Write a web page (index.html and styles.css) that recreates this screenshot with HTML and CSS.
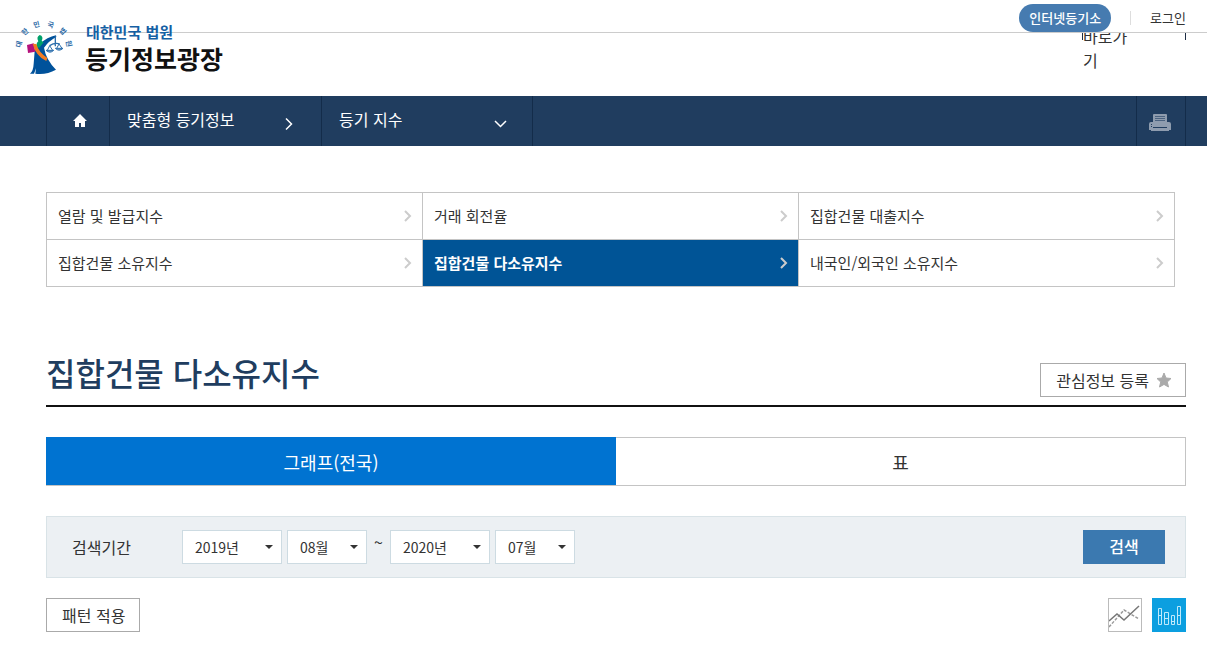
FILE: index.html
```html
<!DOCTYPE html>
<html lang="ko">
<head>
<meta charset="utf-8">
<meta name="viewport" content="width=device-width, initial-scale=1">
<title>집합건물 다소유지수</title>
<link rel="stylesheet" href="styles.css">
</head>
<body>
<header class="header">
  <div class="topbar">
    <a class="topbar-pill" href="#">인터넷등기소</a>
    <a class="topbar-login" href="#">로그인</a>
  </div>
  <a class="quick" href="#"><span class="quick-text">바로가기</span></a>
  <a class="logo" href="#">
    <svg class="logo-mark" viewBox="0 0 210 195" aria-hidden="true">
      <g class="logo-arc">
        <text transform="translate(28 88) rotate(-75)" y="6">대</text>
        <text transform="translate(46 51) rotate(-42)" y="6">한</text>
        <text transform="translate(80 30) rotate(-14)" y="6">민</text>
        <text transform="translate(122 31) rotate(14)" y="6">국</text>
        <text transform="translate(157 50) rotate(45)" y="6">법</text>
        <text transform="translate(175 86) rotate(78)" y="6">원</text>
      </g>
      <path fill="#00529b" d="M88 88 Q112 66 138 61 L139 66 Q116 78 102 98 Q108 134 138 164 Q110 180 76 176 L78 160 L72 176 L60 176 Q70 168 71 146 L74 108 Z"/>
      <path fill="#00a06a" d="M80 96 Q78 84 85 79 Q78 66 89 60 Q102 64 95 78 L101 82 L88 98 Z"/>
      <path fill="#b5127c" d="M51 90 L71 85 L76 110 L54 114 Z"/>
      <path fill="#f47b20" d="M68 86 L79 87 Q86 112 112 129 L109 138 Q78 124 68 86 Z"/>
      <g fill="none" stroke="#2b6eac" stroke-width="3">
        <path stroke-width="4" d="M136 64 V94 M119 92 Q134 82 149 87"/>
        <path d="M119 92 L112 106 M119 92 L128 106 M147 87 L140 100 M147 87 L156 100"/>
        <path d="M108 106 H131 Q120 117 108 106 M136 100 H159 Q147 111 136 100" fill="#7fa8cd"/>
      </g>
    </svg>
    <span class="logo-text">
      <span class="logo-sub">대한민국 법원</span>
      <strong class="logo-name">등기정보광장</strong>
    </span>
  </a>
</header>

<nav class="crumbs">
  <div class="crumbs-inner">
    <a class="crumb crumb-home" href="#" aria-label="홈">
      <svg width="14" height="14" viewBox="0 0 14 14" aria-hidden="true"><path fill="#fff" d="M7 0 L14 7 H12 V13 H8 V9 H6 V13 H2 V7 H0 Z"/></svg>
    </a>
    <a class="crumb" href="#">맞춤형 등기정보
      <svg class="crumb-arrow" width="14" height="14" viewBox="0 0 14 14" aria-hidden="true"><path fill="none" stroke="#fff" stroke-width="1.5" d="M4 1.500 L9.500 7 L4 12.500"/></svg>
    </a>
    <a class="crumb" href="#">등기 지수
      <svg class="crumb-arrow" width="14" height="14" viewBox="0 0 14 14" aria-hidden="true"><path fill="none" stroke="#fff" stroke-width="1.500" d="M2 4 L7.500 9.500 L13 4"/></svg>
    </a>
    <button class="print" type="button" aria-label="인쇄">
      <svg width="22" height="17" viewBox="0 0 22 17" aria-hidden="true">
        <path fill="#8e9cae" d="M4 1 Q4 0 5 0 H17 Q18 0 18 1 V8 H4 Z"/>
        <path stroke="#4a627f" d="M6 2.500 H16 M6 4.500 H16 M6 6.500 H16"/>
        <path fill="#8e9cae" d="M2 8 H20 Q22 8 22 10 V16 H20 V17 H2 V16 H0 V10 Q0 8 2 8 Z"/>
        <path stroke="#203d5f" d="M4 13.500 H18 M2 10.500 H3 M2 12.500 H3"/>
      </svg>
    </button>
  </div>
</nav>

<main class="content">
  <ul class="menu">
    <li><a class="menu-item" href="#">열람 및 발급지수<svg class="menu-arrow" viewBox="0 0 8 12" aria-hidden="true"><path d="M1 1 L6 6 L1 11"/></svg></a></li>
    <li><a class="menu-item" href="#">거래 회전율<svg class="menu-arrow" viewBox="0 0 8 12" aria-hidden="true"><path d="M1 1 L6 6 L1 11"/></svg></a></li>
    <li><a class="menu-item" href="#">집합건물 대출지수<svg class="menu-arrow" viewBox="0 0 8 12" aria-hidden="true"><path d="M1 1 L6 6 L1 11"/></svg></a></li>
    <li><a class="menu-item" href="#">집합건물 소유지수<svg class="menu-arrow" viewBox="0 0 8 12" aria-hidden="true"><path d="M1 1 L6 6 L1 11"/></svg></a></li>
    <li><a class="menu-item is-active" href="#" aria-current="page">집합건물 다소유지수<svg class="menu-arrow" viewBox="0 0 8 12" aria-hidden="true"><path d="M1 1 L6 6 L1 11"/></svg></a></li>
    <li><a class="menu-item" href="#">내국인/외국인 소유지수<svg class="menu-arrow" viewBox="0 0 8 12" aria-hidden="true"><path d="M1 1 L6 6 L1 11"/></svg></a></li>
  </ul>

  <div class="title-row">
    <h1 class="title">집합건물 다소유지수</h1>
    <button class="btn" type="button">관심정보 등록
      <svg width="16" height="16" viewBox="0 0 16 16" aria-hidden="true"><path fill="#aaa" stroke="#aaa" stroke-linejoin="round" d="M8 1 L10 6 L15 6.500 L11.300 10 L12.500 15 L8 12.400 L3.500 15 L4.700 10 L1 6.500 L6 6 Z"/></svg>
    </button>
  </div>

  <div class="tabs" role="tablist">
    <button class="tab is-active" type="button" role="tab" aria-selected="true">그래프(전국)</button>
    <button class="tab" type="button" role="tab" aria-selected="false">표</button>
  </div>

  <form class="search">
    <label class="search-label" for="from-year">검색기간</label>
    <div class="period">
      <span class="select year"><select id="from-year"><option>2019년</option></select></span>
      <span class="select month"><select aria-label="시작 월"><option>08월</option></select></span>
    </div>
    <span class="tilde">~</span>
    <div class="period">
      <span class="select year"><select aria-label="종료 연도"><option>2020년</option></select></span>
      <span class="select month"><select aria-label="종료 월"><option>07월</option></select></span>
    </div>
    <button class="search-btn" type="button">검색</button>
  </form>

  <div class="tools">
    <button class="btn" type="button">패턴 적용</button>
    <div class="views">
      <button class="view" type="button" aria-label="선 그래프">
        <svg width="32" height="32" viewBox="0 0 32 32" fill="none" aria-hidden="true">
          <path stroke="#999" stroke-width="1.500" stroke-dasharray="3 1.500" d="M0 28 L15 11 L30 20"/>
          <path stroke="#777" stroke-width="1.500" d="M0 22 L8 15 L15 21 L30 7"/>
        </svg>
      </button>
      <button class="view is-active" type="button" aria-label="막대 그래프">
        <svg width="34" height="34" viewBox="0 0 34 34" fill="none" stroke="#bfe9fb" aria-hidden="true">
          <path d="M6.500 10.500 H9.500 V26.500 H6.500 Z M6.500 17.500 H9.500 M12.500 14.500 H16.500 V26.500 H12.500 Z M12.500 20.500 H16.500 M19.500 17.500 H22.500 V26.500 H19.500 Z M19.500 23.500 H22.500 M25.500 8.500 H28.500 V26.500 H25.500 Z M25.500 17.500 H28.500"/>
        </svg>
      </button>
    </div>
  </div>
</main>
</body>
</html>
```
FILE: styles.css
```css
* {
  box-sizing: border-box;
}

body {
  margin: 0;
  background: #fff;
  color: #333;
  font: 16px/24px "Noto Sans CJK KR", "Noto Sans", sans-serif;
}

a {
  color: inherit;
  text-decoration: none;
}

button,
select {
  margin: 0;
  padding: 0;
  border: 0;
  border-radius: 0;
  background: none;
  color: inherit;
  font: inherit;
}

svg {
  display: block;
  flex: none;
}

/* Header */
.header {
  position: relative;
  height: 96px;
}

.topbar {
  position: relative;
  z-index: 1;
  display: flex;
  justify-content: flex-end;
  align-items: center;
  height: 33px;
  padding: 3px 21px 0 0;
  border-bottom: 1px solid #ccc;
  background: #fff;
  font-size: 13px;
}

.topbar-pill {
  padding: 0 10px;
  border-radius: 14px;
  background: #467bb0;
  color: #fff;
  font-weight: 500;
  line-height: 28px;
}

.topbar-login {
  margin-left: 19px;
  padding-left: 20px;
  background: linear-gradient(#ddd, #ddd) 0 50% / 1px 14px no-repeat;
}

.quick {
  position: absolute;
  top: 0;
  right: 21px;
  width: 104px;
  height: 40px;
  padding-top: 24px;
  border: solid #1d2d45;
  border-width: 0 1px;
}

.quick-text {
  display: block;
  width: 48px;
  word-break: break-all;
}

.logo {
  position: absolute;
  z-index: 2;
  top: 15px;
  left: 10px;
  display: flex;
  gap: 5px;
}

.logo-mark {
  width: 70px;
  height: 65px;
}

.logo-arc {
  fill: #2f6da8;
  font-size: 21px;
  font-weight: 700;
  text-anchor: middle;
}

.logo-text {
  display: flex;
  flex-direction: column;
  padding-top: 6px;
}

.logo-sub {
  padding-left: 1px;
  color: #1560a4;
  font-size: 15px;
  font-weight: 700;
  line-height: 22px;
}

.logo-name {
  color: #111;
  font-size: 25px;
  line-height: 30px;
}

/* Breadcrumb bar */
.crumbs {
  padding: 0 21px 0 46px;
  background: #203d5f;
  color: #fff;
}

.crumbs-inner {
  display: flex;
  height: 50px;
  border: solid #132c4a;
  border-width: 0 1px;
}

.crumb {
  display: flex;
  justify-content: space-between;
  width: 212px;
  padding: 11px 25px 0 17px;
  border-right: 1px solid #132c4a;
}

.crumb-home {
  justify-content: center;
  width: 63px;
  padding: 18px 0 0 3px;
}

.crumb-arrow {
  margin-top: 10px;
}

.crumb + .crumb + .crumb {
  width: 211px;
}

.print {
  display: flex;
  justify-content: center;
  align-items: center;
  width: 49px;
  margin-left: auto;
  padding: 3px 2px 0 0;
  border-left: 1px solid #132c4a;
}

/* Page content */
.content {
  padding: 46px 21px 27px 46px;
}

.menu {
  display: grid;
  grid-template-columns: repeat(3, 1fr);
  margin: 0 11px 0 0;
  padding: 0;
  border: solid #c4c4c4;
  border-width: 1px 0 0 1px;
  list-style: none;
  font-size: 15px;
}

.menu-item {
  display: flex;
  justify-content: space-between;
  align-items: center;
  height: 47px;
  padding: 0 10px 0 11px;
  border: solid #c4c4c4;
  border-width: 0 1px 1px 0;
}

.menu-item.is-active {
  background: #005496;
  color: #fff;
  font-weight: 700;
}

.menu-arrow {
  width: 8px;
  height: 12px;
  fill: none;
  stroke: #ccc;
  stroke-width: 2;
}

.title-row {
  display: flex;
  justify-content: space-between;
  align-items: flex-end;
  margin-top: 60px;
  padding-bottom: 8px;
  border-bottom: 2px solid #111;
}

.title {
  margin: 0;
  color: #203d5f;
  font-size: 32px;
  font-weight: 500;
  line-height: 50px;
}

.btn {
  display: flex;
  align-items: center;
  gap: 8px;
  height: 34px;
  padding: 0 14px 0 15px;
  border: 1px solid #aaa;
  background: #fff;
}

.title-row .btn {
  gap: 7px;
  padding-right: 13px;
}

.tabs {
  display: grid;
  grid-template-columns: 1fr 1fr;
  margin-top: 30px;
}

.tab {
  height: 49px;
  border: 1px solid #c4c4c4;
  border-left: 0;
  font-size: 18px;
}

.tab.is-active {
  border: solid #0073d1;
  border-width: 1px 0 0;
  border-bottom: 1px solid #c4c4c4;
  background: #0073d1;
  color: #fff;
}

.search {
  display: flex;
  align-items: center;
  margin-top: 30px;
  padding: 13px 20px 13px 25px;
  border: 1px solid #d9e3e7;
  background: #ecf0f3;
}

.search-label {
  width: 110px;
}

.period {
  display: flex;
  gap: 5px;
}

.select {
  position: relative;
}

.select::after {
  content: "";
  position: absolute;
  top: 15px;
  right: 9px;
  border: solid transparent;
  border-width: 4px 4px 0;
  border-top-color: #333;
  pointer-events: none;
}

.select select {
  display: block;
  width: 100%;
  height: 34px;
  padding: 0 12px;
  border: 1px solid #cddbe2;
  appearance: none;
  background: #fff;
  font-size: 14px;
}

.year {
  width: 100px;
}

.month {
  width: 80px;
}

.tilde {
  width: 23px;
  padding-bottom: 10px;
  line-height: 24px;
  text-align: center;
}

.search-btn {
  width: 82px;
  height: 34px;
  margin-left: auto;
  padding-bottom: 2px;
  background: #3b79b0;
  color: #fff;
  font-weight: 500;
}

.tools {
  display: flex;
  justify-content: space-between;
  margin-top: 20px;
}

.views {
  display: flex;
  gap: 10px;
}

.view {
  width: 34px;
  height: 34px;
  border: 1px solid #bbb;
}

.view.is-active {
  border: 0;
  background: #0c9fe0;
}
```
